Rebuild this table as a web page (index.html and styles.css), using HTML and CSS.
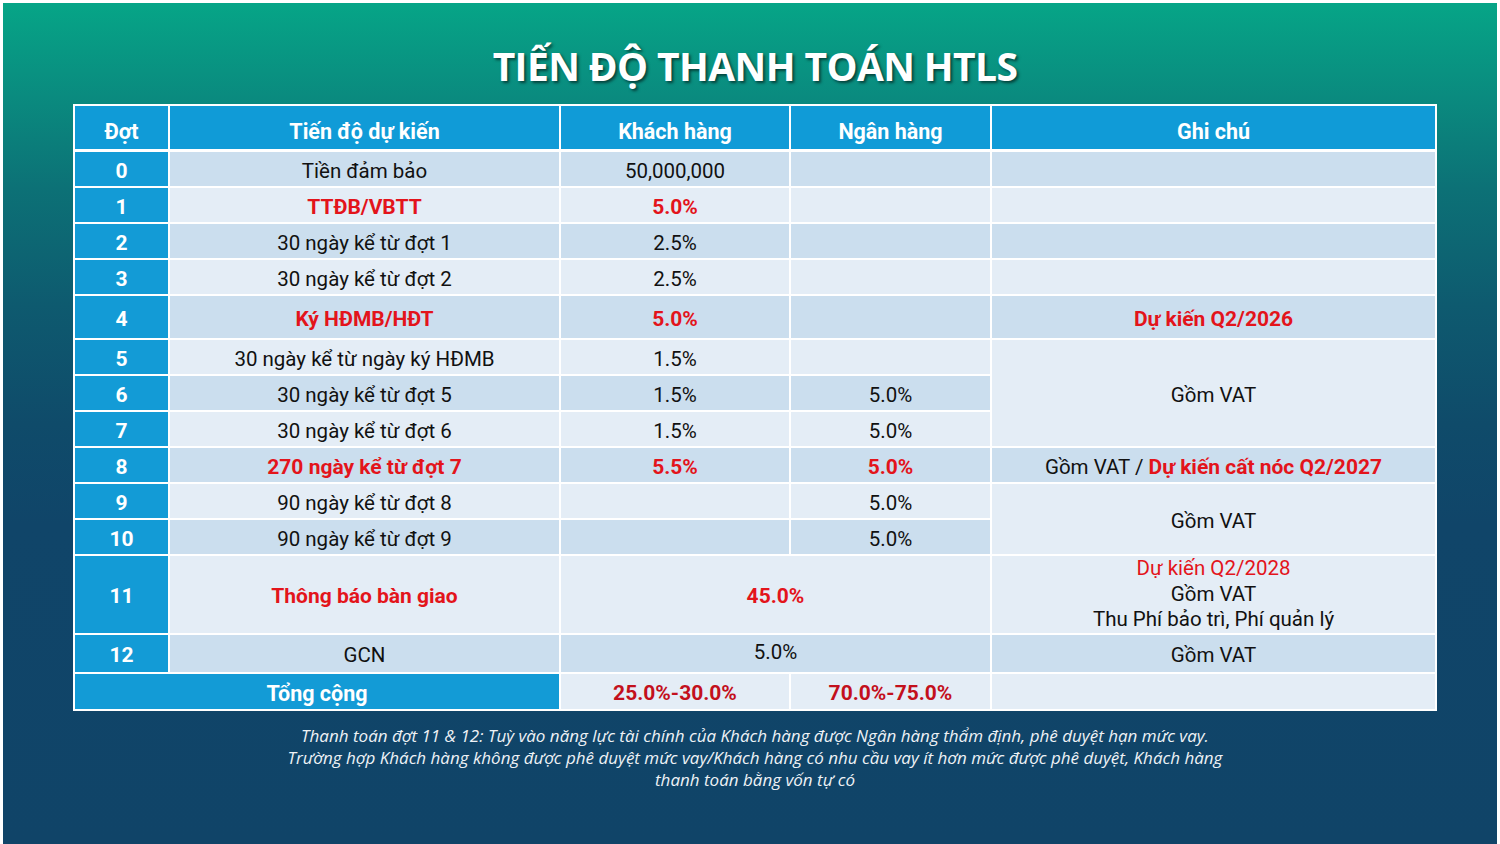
FILE: index.html
```html
<!DOCTYPE html>
<html lang="vi">
<head>
<meta charset="utf-8">
<title>Tiến độ thanh toán HTLS</title>
<link rel="stylesheet" href="styles.css">
</head>
<body>
<div class="slide">
  <h1 class="title">TIẾN ĐỘ THANH TOÁN HTLS</h1>
  <table class="plan">
    <colgroup>
      <col class="c-dot"><col class="c-tien"><col class="c-kh"><col class="c-nh"><col class="c-gc">
    </colgroup>
    <thead>
      <tr class="r-head">
        <th>Đợt</th><th>Tiến độ dự kiến</th><th>Khách hàng</th><th>Ngân hàng</th><th>Ghi chú</th>
      </tr>
    </thead>
    <tbody>
      <tr class="r">
        <td class="dot">0</td><td class="dk">Tiền đảm bảo</td><td class="dk">50,000,000</td><td class="dk"></td><td class="dk"></td>
      </tr>
      <tr class="r">
        <td class="dot">1</td><td class="lt red">TTĐB/VBTT</td><td class="lt red">5.0%</td><td class="lt"></td><td class="lt"></td>
      </tr>
      <tr class="r">
        <td class="dot">2</td><td class="dk">30 ngày kể từ đợt 1</td><td class="dk">2.5%</td><td class="dk"></td><td class="dk"></td>
      </tr>
      <tr class="r">
        <td class="dot">3</td><td class="lt">30 ngày kể từ đợt 2</td><td class="lt">2.5%</td><td class="lt"></td><td class="lt"></td>
      </tr>
      <tr class="r r-tall">
        <td class="dot">4</td><td class="dk red">Ký HĐMB/HĐT</td><td class="dk red">5.0%</td><td class="dk"></td><td class="dk red">Dự kiến Q2/2026</td>
      </tr>
      <tr class="r">
        <td class="dot">5</td><td class="lt">30 ngày kể từ ngày ký HĐMB</td><td class="lt">1.5%</td><td class="lt"></td><td class="lt" rowspan="3">Gồm VAT</td>
      </tr>
      <tr class="r">
        <td class="dot">6</td><td class="dk">30 ngày kể từ đợt 5</td><td class="dk">1.5%</td><td class="dk">5.0%</td>
      </tr>
      <tr class="r">
        <td class="dot">7</td><td class="lt">30 ngày kể từ đợt 6</td><td class="lt">1.5%</td><td class="lt">5.0%</td>
      </tr>
      <tr class="r">
        <td class="dot">8</td><td class="dk red">270 ngày kể từ đợt 7</td><td class="dk red">5.5%</td><td class="dk red">5.0%</td><td class="dk">Gồm VAT / <span class="red">Dự kiến cất nóc Q2/2027</span></td>
      </tr>
      <tr class="r">
        <td class="dot">9</td><td class="lt">90 ngày kể từ đợt 8</td><td class="lt"></td><td class="lt">5.0%</td><td class="lt" rowspan="2">Gồm VAT</td>
      </tr>
      <tr class="r">
        <td class="dot">10</td><td class="dk">90 ngày kể từ đợt 9</td><td class="dk"></td><td class="dk">5.0%</td>
      </tr>
      <tr class="r r-handover">
        <td class="dot">11</td><td class="lt red">Thông báo bàn giao</td><td class="lt red" colspan="2">45.0%</td>
        <td class="lt notes"><span class="red-plain">Dự kiến Q2/2028</span><br>Gồm VAT<br>Thu Phí bảo trì, Phí quản lý</td>
      </tr>
      <tr class="r r-gcn">
        <td class="dot">12</td><td class="dk">GCN</td><td class="dk up" colspan="2">5.0%</td><td class="dk">Gồm VAT</td>
      </tr>
      <tr class="r r-total">
        <td class="total-label" colspan="2">Tổng cộng</td><td class="lt dark-red">25.0%-30.0%</td><td class="lt dark-red">70.0%-75.0%</td><td class="lt"></td>
      </tr>
    </tbody>
  </table>
  <p class="footnote">Thanh toán đợt 11 &amp; 12: Tuỳ vào năng lực tài chính của Khách hàng được Ngân hàng thẩm định, phê duyệt hạn mức vay.<br>Trường hợp Khách hàng không được phê duyệt mức vay/Khách hàng có nhu cầu vay ít hơn mức được phê duyệt, Khách hàng<br>thanh toán bằng vốn tự có</p>
</div>
</body>
</html>
```

FILE: styles.css
```css
html, body {
  margin: 0;
  padding: 0;
  background: #ffffff;
}

.slide {
  margin: 3px 3px 0 3px;
  height: 841px;
  box-sizing: border-box;
  padding-top: 39px;
  background: linear-gradient(180deg, #06a587 0%, #0a8b7f 11%, #0c7176 22%, #0e5a6f 36%, #0f4b6a 50%, #104569 62%, #104468 100%);
  display: flex;
  flex-direction: column;
  align-items: stretch;
  font-family: Roboto, "Liberation Sans", sans-serif;
}

.title {
  margin: 0 0 14px 0;
  padding-left: 10px;
  text-align: center;
  font-family: "Open Sans", "Liberation Sans", sans-serif;
  font-weight: 700;
  font-size: 39px;
  line-height: 48px;
  letter-spacing: -0.6px;
  color: #ffffff;
  text-shadow: 2px 2px 3px rgba(0, 0, 0, 0.55);
}

.plan {
  border-collapse: collapse;
  border: 2px solid #ffffff;
  table-layout: fixed;
  width: 1362px;
  margin-left: 70px;
}

.c-dot { width: 95px; }
.c-tien { width: 391px; }
.c-kh { width: 230px; }
.c-nh { width: 201px; }
.c-gc { width: 445px; }

.plan th, .plan td {
  border: 2px solid #ffffff;
  text-align: center;
  vertical-align: middle;
  font-size: 20.5px;
  color: #111111;
}

.r-head th {
  height: 36px;
  padding: 7px 0 0 0;
  background: #109bd7;
  color: #ffffff;
  font-weight: 700;
  font-size: 21.5px;
  border-bottom-width: 3px;
}

.plan td { padding: 3px 0 0 0; }

.r td { height: 31px; }
.r-tall td { height: 39px; }
.r-handover td { height: 74px; }
.r-gcn td { height: 33px; }
.r-total td { height: 32px; }

.dot {
  background: #139bd6;
  color: #ffffff !important;
  font-weight: 700;
  font-size: 21px !important;
}

.dk { background: #cbdeee; }
.lt { background: #e4edf6; }

.red {
  color: #e3141b !important;
  font-weight: 700;
  font-size: 21px !important;
}

.red-plain { color: #e3141b; }

.dark-red {
  color: #c3101c !important;
  font-weight: 700;
  font-size: 21px !important;
}

.r-handover .notes {
  padding: 0;
  line-height: 25.5px;
}

.r-gcn .up { padding: 0 0 4px 0; }

.total-label {
  background: #139bd6;
  color: #ffffff !important;
  font-weight: 700;
  font-size: 21.5px !important;
}

.footnote {
  margin: 14px 0 0 0;
  padding-left: 10px;
  font-family: "Open Sans", "Liberation Sans", sans-serif;
  font-style: italic;
  font-size: 17px;
  line-height: 22px;
  color: #eef2f6;
  text-align: center;
}
```
